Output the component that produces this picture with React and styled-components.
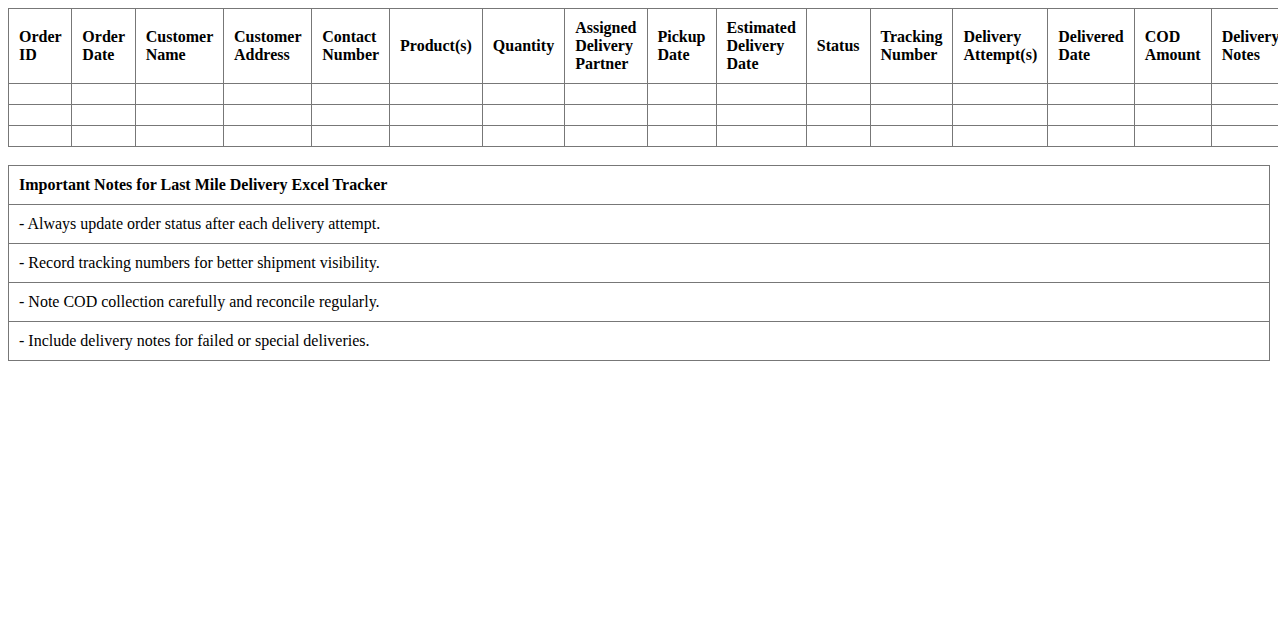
import styled, { createGlobalStyle } from "styled-components";

const GlobalStyle = createGlobalStyle`
  body {
    margin: 8px 0 8px 8px;
    background: #fff;
    color: #000;
    font-family: "Liberation Serif", "Times New Roman", serif;
    font-size: 16px;
  }
`;

const Table = styled.table`
  width: ${(p) => (p.$inset ? "calc(100% - 8px)" : "100%")};
  border-collapse: collapse;
  margin-bottom: ${(p) => p.$gap || "0"};
`;

const Th = styled.th`
  border: 1px solid #777;
  padding: 10px;
  text-align: left;
  font-weight: bold;
`;

const Td = styled.td`
  border: 1px solid #777;
  padding: 10px;
  text-align: left;
`;

const columns = [
  "Order ID",
  "Order Date",
  "Customer Name",
  "Customer Address",
  "Contact Number",
  "Product(s)",
  "Quantity",
  "Assigned Delivery Partner",
  "Pickup Date",
  "Estimated Delivery Date",
  "Status",
  "Tracking Number",
  "Delivery Attempt(s)",
  "Delivered Date",
  "COD Amount",
  "Delivery Notes",
];

const notes = [
  "- Always update order status after each delivery attempt.",
  "- Record tracking numbers for better shipment visibility.",
  "- Note COD collection carefully and reconcile regularly.",
  "- Include delivery notes for failed or special deliveries.",
];

export default function App() {
  return (
    <>
      <GlobalStyle />
      <Table $gap="18px">
        <thead>
          <tr>
            {columns.map((c) => (
              <Th key={c}>{c}</Th>
            ))}
          </tr>
        </thead>
        <tbody>
          {[0, 1, 2].map((r) => (
            <tr key={r}>
              {columns.map((c) => (
                <Td key={c}></Td>
              ))}
            </tr>
          ))}
        </tbody>
      </Table>
      <Table $inset>
        <thead>
          <tr>
            <Th>Important Notes for Last Mile Delivery Excel Tracker</Th>
          </tr>
        </thead>
        <tbody>
          {notes.map((n) => (
            <tr key={n}>
              <Td>{n}</Td>
            </tr>
          ))}
        </tbody>
      </Table>
    </>
  );
}
